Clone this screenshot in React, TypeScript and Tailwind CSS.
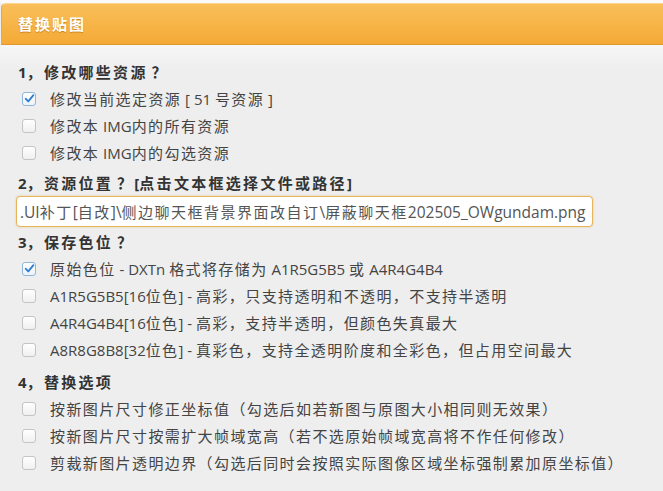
import React from "react";

function Mixed({ text, latin }: { text: string; latin: string }) {
  const parts = text.split(/([\x00-\x7F]+)/).filter((p) => p.length > 0);
  return (
    <>
      {parts.map((p, i) =>
        /^[\x00-\x7F]+$/.test(p) ? (
          <span key={i} className={latin}>
            {p}
          </span>
        ) : (
          <span key={i}>{p}</span>
        )
      )}
    </>
  );
}

function Box({ checked }: { checked?: boolean }) {
  return (
    <span
      className={
        checked
          ? "flex h-[14px] w-[14px] shrink-0 items-center justify-center rounded-[3px] border border-[#8fb6dc] bg-gradient-to-b from-white to-[#eef3f8]"
          : "flex h-[14px] w-[14px] shrink-0 items-center justify-center rounded-[3px] border border-[#c4c4c4] bg-gradient-to-b from-white to-[#f0f0f0]"
      }
    >
      {checked && (
        <svg width="11" height="11" viewBox="0 0 11 11">
          <path d="M1.8 5.8 L4.3 8.4 L9.4 2.2" fill="none" stroke="#2f7fd0" strokeWidth="1.9" strokeLinecap="round" strokeLinejoin="round" />
        </svg>
      )}
    </span>
  );
}

function Row({ text, checked }: { text: string; checked?: boolean }) {
  return (
    <div className="flex h-[27px] items-center pl-[22px]">
      <Box checked={checked} />
      <span className="ml-[14px] whitespace-nowrap text-[15px] leading-[20px] tracking-[1.4px] text-[#444]">
        <Mixed text={text} latin="tracking-normal" />
      </span>
    </div>
  );
}

function Heading({ text, className }: { text: string; className?: string }) {
  return (
    <div className={"flex h-[26px] items-center pl-[18px] " + (className ?? "")}>
      <span className="whitespace-nowrap text-[15px] font-bold leading-[20px] tracking-[2.3px] text-[#333]">
        <Mixed text={text} latin="tracking-normal" />
      </span>
    </div>
  );
}

export default function App() {
  return (
    <div className="h-[491px] w-[663px] overflow-hidden bg-[#eeeeee] font-['Open_Sans','Noto_Sans_CJK_SC',sans-serif]">
      <div className="h-[3px] bg-[#fafafa]" />
      <div className="ml-[1px] flex h-[42px] items-center rounded-tl-[5px] border-t border-b border-l border-t-[#fbd68f] border-b-[#e0972c] border-l-[#eaa641] bg-gradient-to-b from-[#f9bf5a] via-[#f7b548] to-[#f4a935] pl-[16px]">
        <span className="text-[15px] font-bold leading-[20px] tracking-[2px] text-white [text-shadow:0_1px_1px_rgba(150,80,0,0.45)]">
          替换贴图
        </span>
      </div>
      <div className="bg-gradient-to-b from-[#f6f6f6] to-[#eeeeee] to-[26px] pt-[14px]">
        <Heading text="1，修改哪些资源 ？" />
        <Row checked text="修改当前选定资源 [ 51 号资源 ]" />
        <Row text="修改本 IMG内的所有资源" />
        <Row text="修改本 IMG内的勾选资源" />
        <Heading className="mt-[4px]" text="2，资源位置 ？[点击文本框选择文件或路径]" />
        <div className="ml-[16px] flex h-[31px] w-[577px] items-center overflow-hidden rounded-[4px] border border-[#e6b45a] bg-white pl-[3px] shadow-[0_0_2px_rgba(230,170,70,0.6)]">
          <span className="whitespace-nowrap text-[15px] leading-[20px] tracking-[1.5px] text-[#555]">
            <Mixed
              text=".UI补丁[自改]\侧边聊天框背景界面改自订\屏蔽聊天框202505_OWgundam.png"
              latin="text-[15.5px] tracking-normal"
            />
          </span>
        </div>
        <Heading className="mt-[2px]" text="3，保存色位 ？" />
        <Row checked text="原始色位 - DXTn 格式将存储为 A1R5G5B5 或 A4R4G4B4" />
        <Row text="A1R5G5B5[16位色] - 高彩，只支持透明和不透明，不支持半透明" />
        <Row text="A4R4G4B4[16位色] - 高彩，支持半透明，但颜色失真最大" />
        <Row text="A8R8G8B8[32位色] - 真彩色，支持全透明阶度和全彩色，但占用空间最大" />
        <Heading className="mt-[6px]" text="4，替换选项" />
        <Row text="按新图片尺寸修正坐标值（勾选后如若新图与原图大小相同则无效果）" />
        <Row text="按新图片尺寸按需扩大帧域宽高（若不选原始帧域宽高将不作任何修改）" />
        <Row text="剪裁新图片透明边界（勾选后同时会按照实际图像区域坐标强制累加原坐标值）" />
      </div>
    </div>
  );
}
